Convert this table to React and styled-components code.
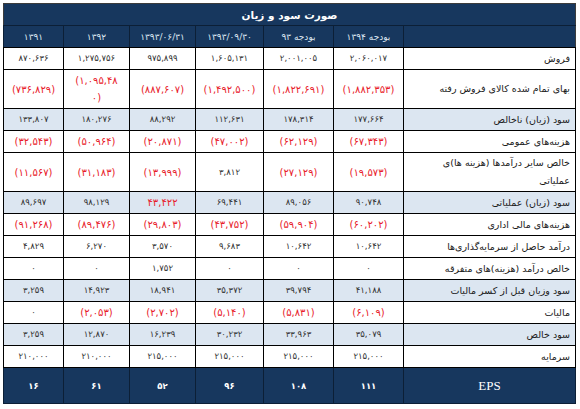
import React from 'react';
import styled, { createGlobalStyle } from 'styled-components';

const GlobalStyle = createGlobalStyle`
  html, body {
    margin: 0;
    padding: 0;
    background: #ffffff;
  }
  body {
    font-family: "DejaVu Sans", "Noto Sans", sans-serif;
  }
`;

// ستون‌ها از راست به چپ
const columns = ['بودجه ۱۳۹۴', 'بودجه ۹۳', '۱۳۹۳/۰۹/۳۰', '۱۳۹۳/۰۶/۳۱', '۱۳۹۲', '۱۳۹۱'];
const widths = [172, 70, 70, 68, 66, 66, 60];

const rows = [
  { label: 'فروش', values: ['۲,۰۶۰,۰۱۷', '۲,۰۰۱,۰۰۵', '۱,۶۰۵,۱۳۱', '۹۷۵,۸۹۹', '۱,۲۷۵,۷۵۶', '۸۷۰,۶۳۶'] },
  {
    label: 'بهای تمام شده کالای فروش رفته',
    tall: true,
    values: ['(۱,۸۸۲,۳۵۳)', '(۱,۸۲۲,۶۹۱)', '(۱,۴۹۲,۵۰۰)', '(۸۸۷,۶۰۷)', ['(۱,۰۹۵,۴۸', '۰)'], '(۷۳۶,۸۲۹)'],
  },
  { label: 'سود (زیان) ناخالص', blue: true, values: ['۱۷۷,۶۶۴', '۱۷۸,۳۱۴', '۱۱۲,۶۳۱', '۸۸,۲۹۲', '۱۸۰,۲۷۶', '۱۳۳,۸۰۷'] },
  { label: 'هزینه‌های عمومی', values: ['(۶۷,۳۴۳)', '(۶۲,۱۲۹)', '(۴۷,۰۰۲)', '(۲۰,۸۷۱)', '(۵۰,۹۶۴)', '(۳۲,۵۴۳)'] },
  {
    label: ['خالص سایر درآمدها (هزینه ها)ی', 'عملیاتی'],
    tall: true,
    values: ['(۱۹,۵۷۳)', '(۲۷,۱۲۹)', '۳,۸۱۲', '(۱۳,۹۹۹)', '(۳۱,۱۸۳)', '(۱۱,۵۶۷)'],
  },
  { label: 'سود (زیان) عملیاتی', blue: true, red: [3], values: ['۹۰,۷۴۸', '۸۹,۰۵۶', '۶۹,۴۴۱', '۴۳,۴۲۲', '۹۸,۱۲۹', '۸۹,۶۹۷'] },
  { label: 'هزینه‌های مالی اداری', values: ['(۶۰,۲۰۲)', '(۵۹,۹۰۴)', '(۴۳,۷۵۲)', '(۲۹,۸۰۳)', '(۸۹,۴۷۶)', '(۹۱,۲۶۸)'] },
  { label: 'درآمد حاصل از سرمایه‌گذاری‌ها', values: ['۱۰,۶۴۲', '۱۰,۶۴۲', '۹,۶۸۳', '۳,۵۷۰', '۶,۲۷۰', '۴,۸۲۹'] },
  { label: 'خالص درآمد (هزینه)های متفرقه', values: ['۰', '۰', '۰', '۱,۷۵۲', '۰', '۰'] },
  { label: 'سود وزیان قبل از کسر مالیات', blue: true, values: ['۴۱,۱۸۸', '۳۹,۷۹۴', '۳۵,۳۷۲', '۱۸,۹۴۱', '۱۴,۹۲۳', '۳,۲۵۹'] },
  { label: 'مالیات', values: ['(۶,۱۰۹)', '(۵,۸۳۱)', '(۵,۱۴۰)', '(۲,۷۰۲)', '(۲,۰۵۳)', '۰'] },
  { label: 'سود خالص', blue: true, values: ['۳۵,۰۷۹', '۳۳,۹۶۳', '۳۰,۲۳۲', '۱۶,۲۳۹', '۱۲,۸۷۰', '۳,۲۵۹'] },
  { label: 'سرمایه', values: ['۲۱۵,۰۰۰', '۲۱۵,۰۰۰', '۲۱۵,۰۰۰', '۲۱۵,۰۰۰', '۲۱۰,۰۰۰', '۲۱۰,۰۰۰'] },
];

const eps = ['۱۱۱', '۱۰۸', '۹۶', '۵۲', '۶۱', '۱۶'];

// متن چندخطی با <br />
const lines = text =>
  Array.isArray(text)
    ? text.map((t, i) => (
        <React.Fragment key={i}>
          {i > 0 && <br />}
          {t}
        </React.Fragment>
      ))
    : text;

const isRed = (row, v, i) =>
  (row.red && row.red.includes(i)) || (Array.isArray(v) ? v[0] : v).startsWith('(');

export default function App() {
  return (
    <Page>
      <GlobalStyle />
      <Table dir="rtl">
        <colgroup>
          {widths.map((w, i) => (
            <col key={i} style={{ width: w }} />
          ))}
        </colgroup>
        <thead>
          <tr>
            <Title colSpan={7}>صورت سود و زیان</Title>
          </tr>
          <tr>
            <HeadCell />
            {columns.map(c => (
              <HeadCell key={c}>{c}</HeadCell>
            ))}
          </tr>
        </thead>
        <tbody>
          {rows.map((row, r) => (
            <Row key={r} $blue={row.blue} $tall={row.tall}>
              <Label>{lines(row.label)}</Label>
              {row.values.map((v, i) => (
                <Num key={i} $red={isRed(row, v, i)}>
                  {lines(v)}
                </Num>
              ))}
            </Row>
          ))}
          <EpsRow>
            <EpsLabel>EPS</EpsLabel>
            {eps.map((v, i) => (
              <EpsCell key={i}>{v}</EpsCell>
            ))}
          </EpsRow>
        </tbody>
      </Table>
    </Page>
  );
}

const Page = styled.div`
  padding: 3px 0 0 3px;
`;

const Table = styled.table`
  width: 573px;
  table-layout: fixed;
  border-collapse: collapse;
  border: 1px solid #3c3c3c;
`;

const Title = styled.th`
  height: 21px;
  padding: 0;
  background: #17375e;
  color: #ffffff;
  font-size: 10.5px;
  font-weight: bold;
  text-align: center;
  border-bottom: 1px solid #0c1f36;
`;

const HeadCell = styled.th`
  height: 21px;
  padding: 0;
  background: #17375e;
  color: #dce6f1;
  font-size: 9px;
  font-weight: normal;
  text-align: center;
  border-left: 1px solid #0c1f36;
  border-bottom: 1px solid #000;
  white-space: nowrap;
`;

const Row = styled.tr`
  height: ${props => (props.$tall ? '39px' : '22px')};
  background: ${props => (props.$blue ? '#dce6f1' : '#ffffff')};
`;

const Label = styled.td`
  padding: 0 5px 0 4px;
  border: 1px solid #000;
  color: #1a1a1a;
  font-size: 9.5px;
  line-height: 18px;
  text-align: right;
  vertical-align: middle;
  white-space: nowrap;
`;

const Num = styled.td`
  padding: 0 2px;
  border: 1px solid #000;
  color: ${props => (props.$red ? '#e8202a' : '#333333')};
  font-size: ${props => (props.$red ? '10px' : '8.5px')};
  line-height: 17px;
  text-align: center;
  vertical-align: middle;
  direction: ltr;
  white-space: nowrap;
`;

const EpsRow = styled.tr`
  height: 36px;
  background: #17375e;
`;

const EpsLabel = styled.td`
  padding: 0;
  border: 1px solid #0c1f36;
  color: #ffffff;
  font-family: "Liberation Serif", serif;
  font-size: 13px;
  text-align: center;
`;

const EpsCell = styled.td`
  padding: 0;
  border: 1px solid #0c1f36;
  color: #ffffff;
  font-size: 8.5px;
  font-weight: bold;
  text-align: center;
`;
